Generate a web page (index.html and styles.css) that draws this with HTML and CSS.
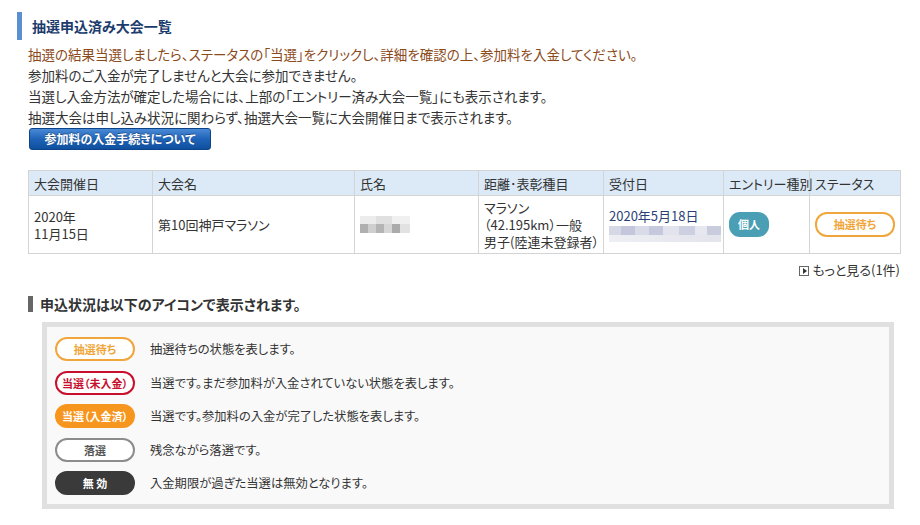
FILE: index.html
```html
<!DOCTYPE html>
<html lang="ja">
<head>
    <meta charset="utf-8">
    <title>抽選申込済み大会一覧</title>
    <link rel="stylesheet" href="styles.css">
</head>
<body>
<div class="page">
    <h2 class="title">抽選申込済み大会一覧</h2>

    <div class="lead">
        <p class="notice">抽選の結果当選しましたら、ステータスの「当選」をクリックし、詳細を確認の上、参加料を入金してください。</p>
        <p>参加料のご入金が完了しませんと大会に参加できません。</p>
        <p>当選し入金方法が確定した場合には、上部の「エントリー済み大会一覧」にも表示されます。</p>
        <p>抽選大会は申し込み状況に関わらず、抽選大会一覧に大会開催日まで表示されます。</p>
        <a class="btn" href="#">参加料の入金手続きについて</a>
    </div>

    <table class="entries">
        <colgroup>
            <col class="c-date">
            <col class="c-name">
            <col class="c-person">
            <col class="c-dist">
            <col class="c-recv">
            <col class="c-type">
            <col class="c-status">
        </colgroup>
        <thead>
        <tr>
            <th>大会開催日</th>
            <th>大会名</th>
            <th>氏名</th>
            <th>距離･表彰種目</th>
            <th>受付日</th>
            <th>エントリー種別</th>
            <th>ステータス</th>
        </tr>
        </thead>
        <tbody>
        <tr>
            <td>2020年<br>11月15日</td>
            <td>第10回神戸マラソン</td>
            <td><div class="blur-name"></div></td>
            <td>マラソン<br>（42.195km）一般<br>男子(陸連未登録者）</td>
            <td class="recv">2020年5月18日<div class="blur-time"></div></td>
            <td><span class="tag">個人</span></td>
            <td><span class="badge wait">抽選待ち</span></td>
        </tr>
        </tbody>
    </table>

    <p class="more"><span class="more-icon"></span>もっと見る(1件)</p>

    <h3 class="subtitle">申込状況は以下のアイコンで表示されます。</h3>

    <div class="legend">
        <div class="legend-row"><span class="badge wait">抽選待ち</span><span>抽選待ちの状態を表します。</span></div>
        <div class="legend-row"><span class="badge unpaid">当選（未入金）</span><span>当選です。まだ参加料が入金されていない状態を表します。</span></div>
        <div class="legend-row"><span class="badge paid">当選（入金済）</span><span>当選です。参加料の入金が完了した状態を表します。</span></div>
        <div class="legend-row"><span class="badge lost">落選</span><span>残念ながら落選です。</span></div>
        <div class="legend-row"><span class="badge void">無 効</span><span>入金期限が過ぎた当選は無効となります。</span></div>
    </div>
</div>
</body>
</html>
```

FILE: styles.css
```css
body {
    margin: 0;
    background-color: #fff;
    color: #333;
    font-family: "Noto Sans CJK JP", "Noto Sans", sans-serif;
    font-size: 13px;
    font-feature-settings: "palt";
}

p {
    margin: 0;
}

.page {
    width: 920px;
    padding-top: 12px;
}

.title {
    margin: 0 0 4px 17px;
    padding-left: 10px;
    border-left: 5px solid #5b8fd2;
    height: 28px;
    line-height: 28px;
    font-size: 14px;
    font-weight: bold;
    color: #1b3b6c;
}

.lead {
    padding-left: 28px;
    line-height: 21px;
    font-size: 13.5px;
}

.notice {
    color: #8b4a1a;
}

.btn {
    display: inline-block;
    width: 180px;
    height: 20px;
    margin-left: 1px;
    line-height: 20px;
    text-align: center;
    font-size: 12px;
    font-weight: bold;
    color: #fff;
    text-decoration: none;
    border: 1px solid #0d4388;
    border-radius: 3px;
    background: linear-gradient(#4a8ad6, #1f63b8 50%, #0f4f9e);
    text-shadow: 0 -1px 0 rgba(0, 0, 0, 0.35);
    vertical-align: top;
}

.entries {
    margin: 20px 0 0 28px;
    width: 872px;
    table-layout: fixed;
    border-collapse: collapse;
    line-height: 17px;
}

.c-date { width: 124px; }
.c-name { width: 202px; }
.c-person { width: 124px; }
.c-dist { width: 125px; }
.c-recv { width: 120px; }
.c-type { width: 86px; }
.c-status { width: 91px; }

.entries th,
.entries td {
    border: 1px solid #d4d4d4;
    padding: 0 5px;
    text-align: left;
    font-weight: normal;
    vertical-align: middle;
    white-space: nowrap;
}

.entries th {
    height: 24px;
    background-color: #dceaf8;
}

.entries td {
    height: 57px;
}

.blur-name {
    width: 50px;
    height: 17px;
    background:
        linear-gradient(90deg, #b0b0b0 0 8px, #cfcfcf 8px 16px, #b4b4b4 16px 24px, #d6d6d6 24px 32px, #ababab 32px 40px, #e2e2e2 40px) bottom / 100% 9px no-repeat,
        linear-gradient(90deg, #ececec 0 16px, #e0e0e0 16px 32px, #f0f0f0 32px) top / 100% 8px no-repeat;
}

.recv {
    color: #2b3f77;
}

.blur-time {
    width: 112px;
    height: 16px;
    margin-top: 2px;
    background:
        linear-gradient(90deg, #d6d8e6 0 12px, #c4c7dc 12px 26px, #d9dbe8 26px 40px, #c6c9dd 40px 54px, #e2e3ec 54px 70px, #cdd0e0 70px 86px, #e6e7ef 86px 98px, #c9ccdc 98px) top / 100% 9px no-repeat,
        linear-gradient(90deg, #eeeff4, #e3e4ec) bottom / 100% 7px no-repeat;
}

.tag {
    display: inline-block;
    width: 40px;
    height: 25px;
    line-height: 25px;
    text-align: center;
    border-radius: 11px;
    background-color: #4b9fb5;
    color: #fff;
    font-size: 11px;
    font-weight: bold;
}

.badge {
    display: inline-block;
    box-sizing: border-box;
    width: 80px;
    height: 24px;
    line-height: 20px;
    text-align: center;
    border: 2px solid transparent;
    border-radius: 12px;
    font-size: 11px;
    font-weight: bold;
    flex-shrink: 0;
}

.entries .badge {
    height: 25px;
    line-height: 21px;
}

.badge.wait {
    border-color: #f0a63a;
    color: #f0a63a;
    background-color: #fff;
}

.badge.unpaid {
    border-color: #c8102e;
    color: #c8102e;
    background-color: #fff;
}

.badge.paid {
    border-color: #f7961f;
    color: #fff;
    background-color: #f7961f;
}

.badge.lost {
    border-color: #8c8c8c;
    color: #555;
    background-color: #fff;
}

.badge.void {
    border-color: #3a3a3a;
    color: #fff;
    background-color: #3a3a3a;
}

.more {
    width: 900px;
    margin-top: 8px;
    text-align: right;
    line-height: 16px;
}

.more-icon {
    display: inline-block;
    position: relative;
    box-sizing: border-box;
    width: 10px;
    height: 10px;
    margin-right: 3px;
    border: 1px solid #666;
    vertical-align: -1px;
}

.more-icon::after {
    content: "";
    position: absolute;
    left: 3px;
    top: 1px;
    border-left: 4px solid #333;
    border-top: 3px solid transparent;
    border-bottom: 3px solid transparent;
}

.subtitle {
    margin: 18px 0 0 28px;
    padding-left: 7px;
    border-left: 5px solid #666;
    height: 16px;
    line-height: 16px;
    font-size: 14px;
    font-weight: bold;
    color: #333;
}

.legend {
    margin: 10px 0 0 42px;
    width: 834px;
    padding: 10px 0 9px 8px;
    border: 5px solid #e0e0e0;
    background-color: #f9f9f9;
    display: flex;
    flex-direction: column;
    gap: 9.5px;
    font-size: 12.3px;
}

.legend-row {
    display: flex;
    align-items: center;
    gap: 15px;
}
```
